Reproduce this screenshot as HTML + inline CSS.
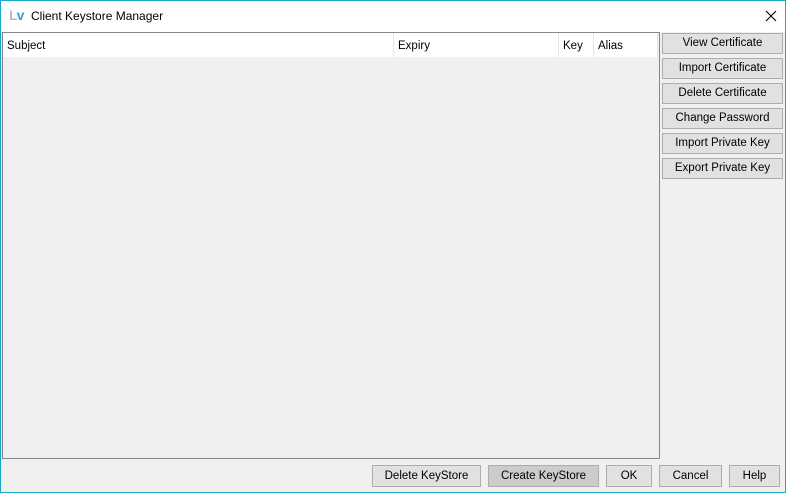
<!DOCTYPE html><html><head><style>
body{margin:0;width:786px;height:493px;overflow:hidden;font-family:"Liberation Sans",sans-serif;font-size:11.5px;color:#000}
.win{position:absolute;left:0;top:0;width:784px;height:491px;border:1px solid #1aa6c8;background:#f0f0f0}
.title{position:absolute;left:0;top:0;width:784px;height:31px;background:#fff}
.abs{position:absolute}
.btn{position:absolute;background:#e1e1e1;border:1px solid #adadad;box-sizing:border-box;text-align:center;line-height:18px;font-size:11.5px}
.th{position:absolute;top:0;height:24px;line-height:26px;padding-left:4px;border-right:1px solid #e5e5e5;box-sizing:border-box}
</style></head><body><div class="win">
<div class="title">
<div class="abs" style="left:8px;top:6px;font-size:14px;font-weight:bold;color:#bbb;letter-spacing:-1px">L<span style="color:#3aa0d8">v</span></div>
<div class="abs" style="left:30px;top:8px;font-size:12px">Client Keystore Manager</div>
<svg class="abs" style="left:764px;top:9px" width="12" height="12"><path d="M1 1L11 11M11 1L1 11" stroke="#000" stroke-width="1.1"/></svg>
</div>
<div class="abs" style="left:1px;top:31px;width:656px;height:425px;border:1px solid #828790;background:#f0f0f0">
<div class="abs" style="left:0;top:0;width:655px;height:24px;background:#fff">
<div class="th" style="left:0;width:391px">Subject</div>
<div class="th" style="left:391px;width:165px">Expiry</div>
<div class="th" style="left:556px;width:35px">Key</div>
<div class="th" style="left:591px;width:64px">Alias</div>
</div></div>
<div class="btn" style="left:661px;top:32px;width:121px;height:21px">View Certificate</div>
<div class="btn" style="left:661px;top:57px;width:121px;height:21px">Import Certificate</div>
<div class="btn" style="left:661px;top:82px;width:121px;height:21px">Delete Certificate</div>
<div class="btn" style="left:661px;top:107px;width:121px;height:21px">Change Password</div>
<div class="btn" style="left:661px;top:132px;width:121px;height:21px">Import Private Key</div>
<div class="btn" style="left:661px;top:157px;width:121px;height:21px">Export Private Key</div>
<div class="btn" style="left:371px;top:464px;width:109px;height:22px;line-height:20px">Delete KeyStore</div>
<div class="btn" style="left:487px;top:464px;width:111px;height:22px;line-height:20px;background:#ccc">Create KeyStore</div>
<div class="btn" style="left:605px;top:464px;width:46px;height:22px;line-height:20px">OK</div>
<div class="btn" style="left:658px;top:464px;width:63px;height:22px;line-height:20px">Cancel</div>
<div class="btn" style="left:728px;top:464px;width:51px;height:22px;line-height:20px">Help</div>
</div></body></html>
